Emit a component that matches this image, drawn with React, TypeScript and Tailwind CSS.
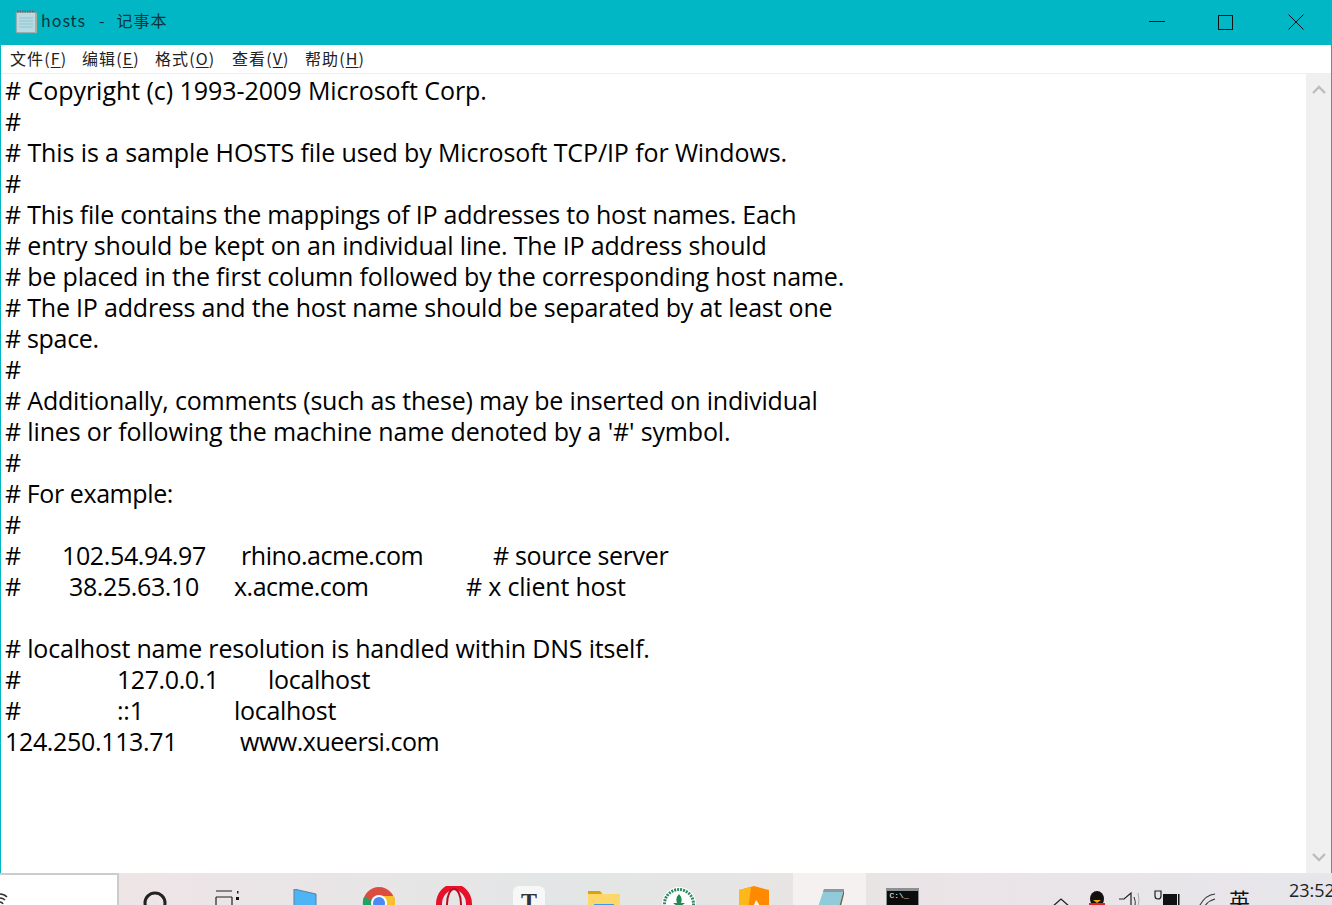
const lines: [string, string][] = [
  ["# Copyright (c) 1993-2009 Microsoft Corp.", "tracking-[-0.05px]"],
  ["#", "tracking-[-0.2px]"],
  ["# This is a sample HOSTS file used by Microsoft TCP/IP for Windows.", "tracking-[-0.11px]"],
  ["#", "tracking-[-0.2px]"],
  ["# This file contains the mappings of IP addresses to host names. Each", "tracking-[-0.23px]"],
  ["# entry should be kept on an individual line. The IP address should", "tracking-[-0.17px]"],
  ["# be placed in the first column followed by the corresponding host name.", "tracking-[-0.19px]"],
  ["# The IP address and the host name should be separated by at least one", "tracking-[-0.2px]"],
  ["# space.", "tracking-[-0.32px]"],
  ["#", "tracking-[-0.2px]"],
  ["# Additionally, comments (such as these) may be inserted on individual", "tracking-[-0.19px]"],
  ["# lines or following the machine name denoted by a '#' symbol.", "tracking-[-0.15px]"],
  ["#", "tracking-[-0.2px]"],
  ["# For example:", "tracking-[-0.41px]"],
  ["#", "tracking-[-0.2px]"],
];

type Col = [string, number, string];

function Row({ cols }: { cols: Col[] }) {
  return (
    <div className="flex h-[31px]">
      {cols.map(([t, w, c], i) => (
        <span key={i} className={`block whitespace-pre ${c}`} style={{ width: w }}>
          {t}
        </span>
      ))}
    </div>
  );
}

function Menu({ zh, k, w }: { zh: string; k: string; w: string }) {
  return (
    <span className={`whitespace-pre shrink-0 ${w}`}>
      {zh}(<span className="underline underline-offset-2">{k}</span>)
    </span>
  );
}

function Slot({ children, active, top, w }: { children: React.ReactNode; active?: boolean; top: number; w?: string }) {
  return (
    <div
      className={`h-[32px] shrink-0 flex justify-center overflow-hidden ${active ? "w-[73px] bg-[#f5f1f1]" : `${w ?? "w-[75px]"} pr-[3px]`}`}
      style={{ paddingTop: top }}
    >
      {children}
    </div>
  );
}

export default function App() {
  return (
    <div
      className="w-[1332px] h-[905px] overflow-hidden flex flex-col bg-white text-black"
      style={{ fontFamily: '"Open Sans","Noto Sans","Noto Sans CJK SC",sans-serif' }}
    >
      <div className="flex-1 min-h-0 flex flex-col border-x border-[#02b7c5]">
        <div className="h-[45px] shrink-0 bg-[#02b7c5] flex items-center pl-[13px]">
          <svg width="24" height="24" viewBox="0 0 24 24" className="shrink-0 -mt-[2px]">
            <rect x="2" y="2" width="20" height="21" fill="#9fd0dc" stroke="#8a8f8c" />
            <rect x="3" y="3" width="18" height="19" fill="#b8dbe3" />
            <path d="M3 1.5h18" stroke="#666" strokeWidth="2" strokeDasharray="1.5 1" />
            <path d="M5 8h14M5 11h14M5 14h14M5 17h14" stroke="#8fc3d2" />
            <rect x="21" y="3" width="2" height="20" fill="#b5ab90" />
          </svg>
          <span
            className="ml-[3px] -mt-[5px] flex text-[16px] tracking-[1px] whitespace-pre text-[#06343a]"
            style={{ fontFamily: '"Noto Sans CJK SC",sans-serif' }}
          >
            <span>hosts</span>
            <span className="ml-[13px]">-</span>
            <span className="ml-[11px]">记事本</span>
          </span>
          <div className="ml-auto flex items-center pr-[27px] -mt-[1px]">
            <svg width="16" height="2" className="mr-[53px]"><rect width="16" height="1" fill="#111" /></svg>
            <svg width="15" height="15" className="mr-[55px]"><rect x="0.5" y="0.5" width="14" height="14" fill="none" stroke="#111" /></svg>
            <svg width="16" height="16"><path d="M0.5 0.5l15 15M15.5 0.5l-15 15" stroke="#111" /></svg>
          </div>
        </div>
        <div
          className="h-[29px] shrink-0 flex items-center pl-[9px] pb-[3px] text-[16px] tracking-[1.1px] border-b border-[#eeeeee] text-[#222]"
          style={{ fontFamily: '"Noto Sans CJK SC",sans-serif' }}
        >
          <Menu zh="文件" k="F" w="w-[72px]" />
          <Menu zh="编辑" k="E" w="w-[73px]" />
          <Menu zh="格式" k="O" w="w-[77px]" />
          <Menu zh="查看" k="V" w="w-[73px]" />
          <Menu zh="帮助" k="H" w="w-[60px]" />
        </div>
        <div className="flex-1 min-h-0 flex">
          <div className="flex-1 pl-[4px] pt-[1px] text-[25px] leading-[31px] text-black">
            {lines.map(([l, c], i) => (
              <div key={i} className={`h-[31px] whitespace-pre ${c}`}>{l}</div>
            ))}
            <Row cols={[["#", 57, ""], ["102.54.94.97", 179, "tracking-[-0.37px]"], ["rhino.acme.com", 252, "tracking-[-0.45px]"], ["# source server", 300, "tracking-[-0.35px]"]]} />
            <Row cols={[["#", 64, ""], ["38.25.63.10", 165, "tracking-[-0.38px]"], ["x.acme.com", 232, "tracking-[-0.5px]"], ["# x client host", 300, "tracking-[-0.2px]"]]} />
            <div className="h-[31px]" />
            <div className="h-[31px] whitespace-pre tracking-[-0.2px]"># localhost name resolution is handled within DNS itself.</div>
            <Row cols={[["#", 112, ""], ["127.0.0.1", 151, "tracking-[-0.42px]"], ["localhost", 300, "tracking-[-0.3px]"]]} />
            <Row cols={[["#", 112, ""], ["::1", 117, "tracking-[-0.2px]"], ["localhost", 300, "tracking-[-0.3px]"]]} />
            <Row cols={[["124.250.113.71", 235, "tracking-[-0.34px]"], ["www.xueersi.com", 300, "tracking-[-0.47px]"]]} />
          </div>
          <div className="w-[25px] shrink-0 bg-[#f0f0f0] flex flex-col justify-between items-center py-[11px]">
            <svg width="14" height="9" viewBox="0 0 14 9"><path d="M1 8l6-6 6 6" fill="none" stroke="#bdbdbd" strokeWidth="2.4" /></svg>
            <svg width="14" height="9" viewBox="0 0 14 9"><path d="M1 1l6 6 6-6" fill="none" stroke="#bdbdbd" strokeWidth="2.4" /></svg>
          </div>
        </div>
      </div>
      <div className="h-[32px] shrink-0 flex overflow-hidden bg-[linear-gradient(90deg,#f1e4e6_0%,#e3e6e6_42%,#e9e4e4_65%,#ebe4e8_72%,#e6e6ea_100%)]">
        <div className="w-[119px] shrink-0 h-full bg-white border-t-2 border-r-2 border-[#cccccc] overflow-hidden">
          <svg width="8" height="14" className="mt-[17px]"><path d="M0 2q4 0 7 3M0 6q3 0 5 2M0 10q2 0 3 2" fill="none" stroke="#333" strokeWidth="1.6" /></svg>
        </div>
        <Slot top={18} w="w-[74px]">
          <svg width="24" height="24"><circle cx="12" cy="12" r="10" fill="none" stroke="#222" strokeWidth="3" /></svg>
        </Slot>
        <Slot top={17}>
          <svg width="26" height="24" className="-ml-[3px]">
            <path d="M1 1h16M1 7h16M1 7v15M17 7v15" fill="none" stroke="#222" strokeWidth="1.2" />
            <rect x="22" y="1" width="1.5" height="2.5" fill="#222" />
            <rect x="21" y="7" width="3" height="3" fill="#111" />
          </svg>
        </Slot>
        <Slot top={16}>
          <svg width="26" height="26" className="ml-[2px]"><path d="M2 0l22 5v18H2z" fill="#4db5f5" stroke="#5c7f99" /></svg>
        </Slot>
        <Slot top={13}>
          <svg width="34" height="34" viewBox="0 0 34 34">
            <circle cx="17" cy="17" r="16" fill="#db4e3f" />
            <path d="M17 17L3 25a16 16 0 0 1 -1-14z" fill="#1ea362" />
            <path d="M17 10h15a16 16 0 0 1 1 7v16H17z" fill="#fbc02d" />
            <circle cx="17" cy="17" r="8" fill="#fff" />
            <circle cx="17" cy="17" r="6" fill="#4a8af4" />
          </svg>
        </Slot>
        <Slot top={13}>
          <svg width="36" height="36" viewBox="0 0 36 36">
            <ellipse cx="18" cy="18" rx="15" ry="17" fill="none" stroke="#e8112a" strokeWidth="6" />
            <ellipse cx="18" cy="18" rx="7" ry="15" fill="none" stroke="#b90d1f" strokeWidth="2" />
          </svg>
        </Slot>
        <Slot top={13}>
          <div className="w-[32px] h-[40px] rounded-[6px] bg-[#f7f7f7] flex justify-center pt-[2px] text-[24px] leading-[26px] text-[#333] font-bold" style={{ fontFamily: '"Liberation Serif",serif' }}>
            T
          </div>
        </Slot>
        <Slot top={17}>
          <svg width="32" height="28" viewBox="0 0 32 28">
            <path d="M0 1h12l3 4H0z" fill="#d9a209" />
            <rect y="4" width="32" height="24" fill="#fdd76a" />
            <rect x="6" y="14" width="20" height="14" fill="#3d9be9" />
          </svg>
        </Slot>
        <Slot top={13}>
          <svg width="36" height="36" viewBox="0 0 36 36">
            <circle cx="18" cy="18" r="17" fill="#fff" />
            <circle cx="18" cy="18" r="14.5" fill="none" stroke="#2f8a5e" strokeWidth="3" strokeDasharray="2 1" />
            <path d="M18 8q4 4 2 9h4l-4 3v5h-4v-5l-4-3h4q-2-5 2-9z" fill="#1f8a53" />
          </svg>
        </Slot>
        <Slot top={13}>
          <svg width="30" height="34" viewBox="0 0 30 34">
            <path d="M0 4l15-4 15 4v30H0z" fill="#ff8a00" />
            <path d="M0 4l12-3-4 30H0z" fill="#ffb81c" />
            <path d="M8 26q6-3 9-12 6 6 5 20H8z" fill="#fff2e0" />
          </svg>
        </Slot>
        <Slot top={15} active>
          <svg width="34" height="34" viewBox="0 0 34 34">
            <path d="M11 1h20l-9 33H0z" fill="#8fcbd8" />
            <path d="M11 1h20l-1 3H10z" fill="#8c99a0" />
            <path d="M31 1v5l-7 28h-2z" fill="#6b6250" />
          </svg>
        </Slot>
        <Slot top={15}>
          <div className="w-[33px] h-[30px] bg-[#0c0c0c] border-x border-t-[3px] border-[#8c8f94] text-[8px] leading-[10px] text-white pl-[3px]" style={{ fontFamily: '"Liberation Mono",monospace' }}>
            C:\_
          </div>
        </Slot>
        <div className="flex-1 min-w-0 relative">
          <div className="flex items-start h-full pl-[109px]">
            <svg width="22" height="12" className="mt-[24px] shrink-0"><path d="M2 10l9-8 9 8" fill="none" stroke="#222" strokeWidth="1.3" /></svg>
            <svg width="18" height="22" className="ml-[16px] mt-[18px] shrink-0">
              <ellipse cx="9" cy="8" rx="7" ry="8" fill="#111" />
              <path d="M5 9h8l-4 3z" fill="#f5a800" />
              <rect x="1" y="12" width="16" height="10" fill="#e02030" />
            </svg>
            <svg width="24" height="20" className="ml-[12px] mt-[18px] shrink-0">
              <path d="M1 8h5l7-6v16" fill="none" stroke="#222" strokeWidth="1.2" />
              <path d="M16 6q2 4 1 10" fill="none" stroke="#333" />
              <path d="M20 2q2 7 0 14" fill="none" stroke="#aaa" />
            </svg>
            <svg width="26" height="20" className="ml-[12px] mt-[17px] shrink-0">
              <path d="M1 1v5q0 3 3 3t3-3V1z" fill="none" stroke="#222" strokeWidth="1.2" />
              <rect x="9" y="4" width="14" height="12" fill="#111" />
              <rect x="24" y="4" width="1.5" height="12" fill="#111" />
            </svg>
            <svg width="26" height="20" className="ml-[17px] mt-[18px] shrink-0">
              <path d="M1 18q6-14 17-15M6 18q4-8 12-10" fill="none" stroke="#333" strokeWidth="1.1" />
            </svg>
            <span className="ml-[6px] mt-[14px] text-[21px] leading-[24px] shrink-0 text-[#111]" style={{ fontFamily: '"Noto Sans CJK SC",sans-serif' }}>英</span>
            <span className="absolute left-[348px] top-[5px] text-[18px] leading-[24px] text-[#222] whitespace-pre">23:52</span>
          </div>
        </div>
      </div>
    </div>
  );
}
